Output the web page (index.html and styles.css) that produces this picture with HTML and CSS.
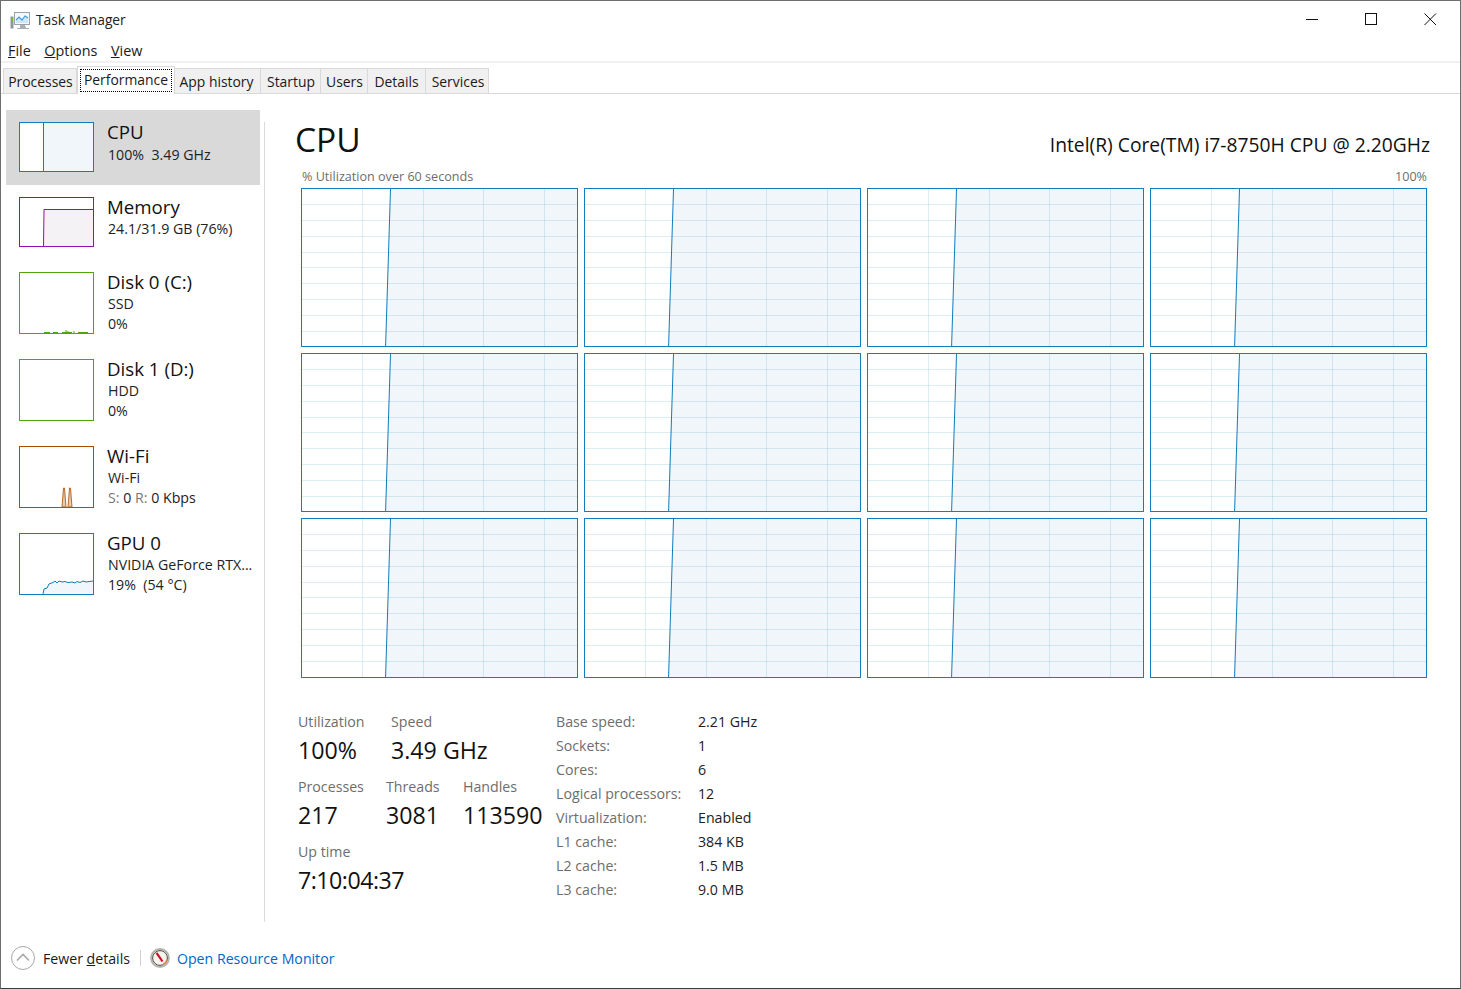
FILE: index.html
```html
<!DOCTYPE html>
<html lang="en">
<head>
<meta charset="utf-8">
<title>Task Manager</title>
<link rel="stylesheet" href="styles.css">
</head>
<body>
<svg class="defs" width="0" height="0" aria-hidden="true">
  <defs>
    <g id="plot">
      <polygon points="88.5,0 275,0 275,170 83,170" fill="#f1f6fa"/>
      <g stroke="#117dbb" stroke-opacity="0.14" stroke-width="1" fill="none">
        <path d="M60.5 0V170M121.5 0V170M181.5 0V170M242.5 0V170"/>
        <path d="M0 15.5H275M0 31.5H275M0 47.5H275M0 63.5H275M0 78.5H275M0 94.5H275M0 110.5H275M0 126.5H275M0 142.5H275"/>
      </g>
      <path d="M88.5 0L83.5 160" stroke="#117dbb" stroke-width="1" fill="none"/>
    </g>
  </defs>
</svg>
<div class="window">
  <header class="titlebar">
    <svg class="app-icon" width="20" height="18" viewBox="0 0 20 18">
      <rect x="4.5" y="0.5" width="15" height="12" fill="#f4f8fb" stroke="#9aa3a8"/>
      <path d="M6 8L9 5L12 8L15 4L18 6V11H6Z" fill="#cfe6f6"/>
      <path d="M6 8L9 5L12 8L15 4L18 6" fill="none" stroke="#3f9fdc" stroke-width="1.2"/>
      <path d="M10 13h5l1 3h3v1H7v-1h3z" fill="#a9afb3"/>
      <rect x="0.5" y="4.5" width="3" height="12" fill="#8f979c"/>
      <rect x="1" y="6" width="2" height="3" fill="#66c23c"/>
    </svg>
    <span class="app-title">Task Manager</span>
    <div class="win-controls">
      <svg class="win-btn" width="13" height="13" viewBox="0 0 13 13"><path d="M0 6.5H12" stroke="#111" fill="none"/></svg>
      <svg class="win-btn" width="13" height="13" viewBox="0 0 13 13"><rect x="0.5" y="0.5" width="11" height="11" stroke="#111" fill="none"/></svg>
      <svg class="win-btn" width="13" height="13" viewBox="0 0 13 13"><path d="M0.5 0.5L12 12M12 0.5L0.5 12" stroke="#111" fill="none"/></svg>
    </div>
  </header>
  <nav class="menubar">
    <span class="menu-item"><u>F</u>ile</span>
    <span class="menu-item"><u>O</u>ptions</span>
    <span class="menu-item"><u>V</u>iew</span>
  </nav>
  <div class="tabs">
    <span class="tab tab-processes">Processes</span>
    <span class="tab tab-active"><span class="focus-ring">Performance</span></span>
    <span class="tab tab-app">App history</span>
    <span class="tab tab-startup">Startup</span>
    <span class="tab tab-users">Users</span>
    <span class="tab tab-details">Details</span>
    <span class="tab tab-services">Services</span>
  </div>
  <div class="content">
    <aside class="sidebar">
      <div class="side-item selected">
        <div class="thumb thumb-cpu">
          <svg class="fill-svg"><polygon points="24,0 75,0 75,50 23,50" fill="#f1f6fa"/><path d="M23.5 0V50" stroke="#117dbb"/></svg>
        </div>
        <div class="side-text">
          <div class="side-name">CPU</div>
          <div class="side-sub">100%&nbsp; 3.49 GHz</div>
        </div>
      </div>
      <div class="side-item">
        <div class="thumb thumb-mem">
          <svg class="fill-svg"><polygon points="24,11.5 75,11.5 75,50 23,50" fill="#f4f2f4"/><path d="M23.5 50L24 11.5H75" stroke="#8b12ae" fill="none"/></svg>
        </div>
        <div class="side-text side-text-tight">
          <div class="side-name">Memory</div>
          <div class="side-sub">24.1/31.9 GB (76%)</div>
        </div>
      </div>
      <div class="side-item">
        <div class="thumb tall thumb-disk">
          <svg class="fill-svg"><path d="M24 59.5H30M38 59.5H33M42 59.5H52M54 60V58M46 60V57M48 60V58M58 59.5H68" stroke="#4da60c" fill="none"/></svg>
        </div>
        <div class="side-text side-text-tight">
          <div class="side-name">Disk 0 (C:)</div>
          <div class="side-sub">SSD</div>
          <div class="side-sub">0%</div>
        </div>
      </div>
      <div class="side-item">
        <div class="thumb tall thumb-disk"></div>
        <div class="side-text side-text-tight">
          <div class="side-name">Disk 1 (D:)</div>
          <div class="side-sub">HDD</div>
          <div class="side-sub">0%</div>
        </div>
      </div>
      <div class="side-item">
        <div class="thumb tall thumb-wifi">
          <svg class="fill-svg"><path d="M42 60L43.5 41H44.5L46 60ZM48 60L49.5 41H50.5L52 60Z" fill="#e8c9ad" stroke="#a74f01" stroke-width="0.8"/></svg>
        </div>
        <div class="side-text side-text-tight">
          <div class="side-name">Wi-Fi</div>
          <div class="side-sub">Wi-Fi</div>
          <div class="side-sub"><span class="dim">S:</span> 0 <span class="dim">R:</span> 0 Kbps</div>
        </div>
      </div>
      <div class="side-item">
        <div class="thumb tall thumb-gpu">
          <svg class="fill-svg"><path d="M23 60L24 55L27 54L29 50L33 48.5L35 47L37 49L39 47L42 48L45 47.5L48 48.5L52 48L55 49L57 47.5L60 48.5L63 47L66 48L73 47V60Z" fill="#f1f6fa"/><path d="M23 60L24 55L27 54L29 50L33 48.5L35 47L37 49L39 47L42 48L45 47.5L48 48.5L52 48L55 49L57 47.5L60 48.5L63 47L66 48L73 47" fill="none" stroke="#117dbb"/></svg>
        </div>
        <div class="side-text side-text-tight">
          <div class="side-name">GPU 0</div>
          <div class="side-sub">NVIDIA GeForce RTX...</div>
          <div class="side-sub">19%&nbsp; (54 °C)</div>
        </div>
      </div>
    </aside>
    <div class="divider"></div>
    <main class="main">
      <div class="main-head">
        <h1 class="main-title">CPU</h1>
        <div class="cpu-model">Intel(R) Core(TM) i7-8750H CPU @ 2.20GHz</div>
      </div>
      <div class="axis">
        <span>% Utilization over 60 seconds</span>
        <span>100%</span>
      </div>
      <div class="cores">
        <div class="core"><svg class="fill-svg"><use href="#plot"/></svg></div>
        <div class="core"><svg class="fill-svg"><use href="#plot"/></svg></div>
        <div class="core"><svg class="fill-svg"><use href="#plot"/></svg></div>
        <div class="core"><svg class="fill-svg"><use href="#plot"/></svg></div>
        <div class="core"><svg class="fill-svg"><use href="#plot"/></svg></div>
        <div class="core"><svg class="fill-svg"><use href="#plot"/></svg></div>
        <div class="core"><svg class="fill-svg"><use href="#plot"/></svg></div>
        <div class="core"><svg class="fill-svg"><use href="#plot"/></svg></div>
        <div class="core"><svg class="fill-svg"><use href="#plot"/></svg></div>
        <div class="core"><svg class="fill-svg"><use href="#plot"/></svg></div>
        <div class="core"><svg class="fill-svg"><use href="#plot"/></svg></div>
        <div class="core"><svg class="fill-svg"><use href="#plot"/></svg></div>
      </div>
      <section class="stats">
        <div class="live">
          <div class="stat-row">
            <div class="stat stat-util"><div class="stat-label">Utilization</div><div class="stat-value">100%</div></div>
            <div class="stat"><div class="stat-label">Speed</div><div class="stat-value">3.49 GHz</div></div>
          </div>
          <div class="stat-row">
            <div class="stat stat-proc"><div class="stat-label">Processes</div><div class="stat-value">217</div></div>
            <div class="stat stat-thr"><div class="stat-label">Threads</div><div class="stat-value">3081</div></div>
            <div class="stat"><div class="stat-label">Handles</div><div class="stat-value">113590</div></div>
          </div>
          <div class="stat-row">
            <div class="stat"><div class="stat-label">Up time</div><div class="stat-value uptime">7:10:04:37</div></div>
          </div>
        </div>
        <dl class="specs">
          <dt>Base speed:</dt><dd>2.21 GHz</dd>
          <dt>Sockets:</dt><dd>1</dd>
          <dt>Cores:</dt><dd>6</dd>
          <dt>Logical processors:</dt><dd>12</dd>
          <dt>Virtualization:</dt><dd>Enabled</dd>
          <dt>L1 cache:</dt><dd>384 KB</dd>
          <dt>L2 cache:</dt><dd>1.5 MB</dd>
          <dt>L3 cache:</dt><dd>9.0 MB</dd>
        </dl>
      </section>
    </main>
  </div>
  <footer class="footer">
    <svg class="chevron" width="24" height="24" viewBox="0 0 24 24">
      <circle cx="12" cy="12" r="11.5" fill="#fff" stroke="#a8a8a8"/>
      <path d="M6 14.5L12 8.5L18 14.5" fill="none" stroke="#a8a8a8" stroke-width="1.6"/>
    </svg>
    <span class="fewer">Fewer <u>d</u>etails</span>
    <span class="foot-sep"></span>
    <svg class="gauge" width="20" height="20" viewBox="0 0 20 20">
      <circle cx="10" cy="10" r="9" fill="#f5f1e8" stroke="#b4b4ae" stroke-width="1.8"/>
      <circle cx="10" cy="10" r="7.4" fill="#f7f4ec" stroke="#4a4a45" stroke-width="1"/>
      <path d="M12.5 13.5L6.5 4.8" stroke="#c8102e" stroke-width="2.2"/>
      <path d="M13 16.5A7 7 0 0 0 16.8 12" stroke="#dd8a3a" stroke-width="1.4" fill="none"/>
    </svg>
    <a class="link">Open Resource Monitor</a>
  </footer>
</div>
</body>
</html>
```
FILE: styles.css
```css
* { box-sizing: border-box; }
html, body { margin: 0; padding: 0; background: #fff; }
body { font-family: "Open Sans", "Noto Sans", sans-serif; color: #111; overflow: hidden; }
.defs { position: absolute; }
.window {
  width: 1461px; height: 989px; display: flex; flex-direction: column;
  border: 1px solid #6f6f6f; border-bottom-color: #3c3c3c; background: #fff;
}
.titlebar { height: 39px; display: flex; align-items: center; padding-left: 9px; flex: none; }
.app-icon { flex: none; }
.app-title { font-size: 13.8px; margin-left: 6px; margin-top: -2px; color: #222; }
.win-controls { margin-left: auto; display: flex; gap: 46px; padding-right: 23px; margin-top: -2px; }
.win-btn { flex: none; display: block; }
.menubar {
  height: 23px; flex: none; display: flex; align-items: flex-start; padding-left: 7px;
  font-size: 14.4px; gap: 13.5px; border-bottom: 2px solid #f1f1f1; line-height: 22px; color: #1a1a1a;
}
.tabs { height: 31px; flex: none; display: flex; align-items: flex-end; padding-left: 2px; border-bottom: 1px solid #d9d9d9; }
.tab {
  height: 25px; background: #f0f0f0; border: 1px solid #d9d9d9; border-bottom: 0; border-left: 0;
  font-size: 13.9px; line-height: 25px; text-align: center; color: #1a1a1a; flex: none;
}
.tab-processes { width: 74px; border-left: 1px solid #d9d9d9; padding-left: 1px; }
.tab-active {
  width: 98px; height: 28px; background: #fff; border-left: 1px solid #d9d9d9; padding: 2px; margin-bottom: -1px;
  position: relative; z-index: 1; line-height: 22px;
}
.focus-ring { display: block; height: 23px; border: 1px dotted #000; line-height: 20px; }
.tab-app { width: 86px; padding-right: 2px; }
.tab-startup { width: 60px; padding-left: 1px; }
.tab-users { width: 47px; padding-left: 1px; }
.tab-details { width: 58px; }
.tab-services { width: 63px; padding-left: 2px; }
.content { flex: 1; display: flex; min-height: 0; }
.sidebar { width: 263px; padding: 16px 0 0 5px; flex: none; }
.side-item { width: 254px; display: flex; padding: 12px 0 13px 13px; }
.side-item.selected { background: #d9d9d9; }
.thumb { width: 75px; height: 50px; flex: none; border: 1px solid; background: #fff; overflow: hidden; }
.thumb.tall { height: 62px; }
.thumb-cpu { border-color: #117dbb; }
.thumb-mem { border-color: #8b12ae; }
.thumb-disk { border-color: #4da60c; }
.thumb-wifi { border-color: #a74f01; }
.thumb-gpu { border-color: #117dbb; }
.fill-svg { display: block; width: 100%; height: 100%; }
.side-text { margin-left: 13px; margin-top: -2px; margin-bottom: -4px; white-space: nowrap; }
.side-name { font-size: 18.7px; line-height: 24px; margin-bottom: 1px; color: #111; }
.side-text-tight .side-name { margin-bottom: 0; }
.side-sub { font-size: 14.2px; line-height: 20px; color: #222; padding-left: 1px; }
.dim { color: #777; }
.divider { width: 1px; height: 800px; margin-top: 28px; background: #d9d9d9; flex: none; }
.main { flex: none; width: 1165px; padding-left: 30px; display: flex; flex-direction: column; }
.main-head { display: flex; align-items: flex-start; justify-content: space-between; height: 73px; padding-top: 25px; }
.main-title { font-size: 33.5px; font-weight: 400; margin: 0; line-height: 40px; color: #111; }
.cpu-model { font-size: 19.25px; line-height: 26px; color: #111; margin-top: 13px; }
.axis { display: flex; justify-content: space-between; width: 1125px; margin-left: 7px; font-size: 12.6px; line-height: 20px; color: #6d6d6d; }
.cores { display: grid; grid-template-columns: repeat(4, 277px); grid-template-rows: 159px 159px 160px; gap: 6px; margin-left: 6px; margin-top: 1px; }
.core { border: 1px solid #117dbb; background: #fff; overflow: hidden; }
.stats { display: flex; margin-top: 34px; margin-left: 3px; }
.live { width: 258px; flex: none; }
.stat-row { display: flex; height: 65px; }
.stat-util { width: 93px; }
.stat-proc { width: 88px; }
.stat-thr { width: 77px; }
.stat-label { font-size: 14.2px; line-height: 20px; color: #6d6d6d; white-space: nowrap; }
.stat-value { font-size: 23.2px; line-height: 32px; margin-top: 2px; color: #111; white-space: nowrap; }
.uptime { letter-spacing: -0.5px; }
.specs { display: grid; grid-template-columns: 142px auto; grid-auto-rows: 24px; margin: 0; font-size: 14.2px; line-height: 20px; align-content: start; }
.specs dt { color: #6d6d6d; }
.specs dd { margin: 0; color: #222; }
.footer { height: 56px; flex: none; display: flex; align-items: center; padding-left: 10px; padding-bottom: 4px; margin-top: auto; font-size: 14.15px; }
.chevron { flex: none; }
.fewer { margin-left: 8px; color: #1a1a1a; }
.foot-sep { width: 1px; height: 16px; background: #d0d0d0; margin: 0 9px 0 10px; flex: none; }
.gauge { flex: none; }
.link { margin-left: 7px; color: #0066cc; }
```
